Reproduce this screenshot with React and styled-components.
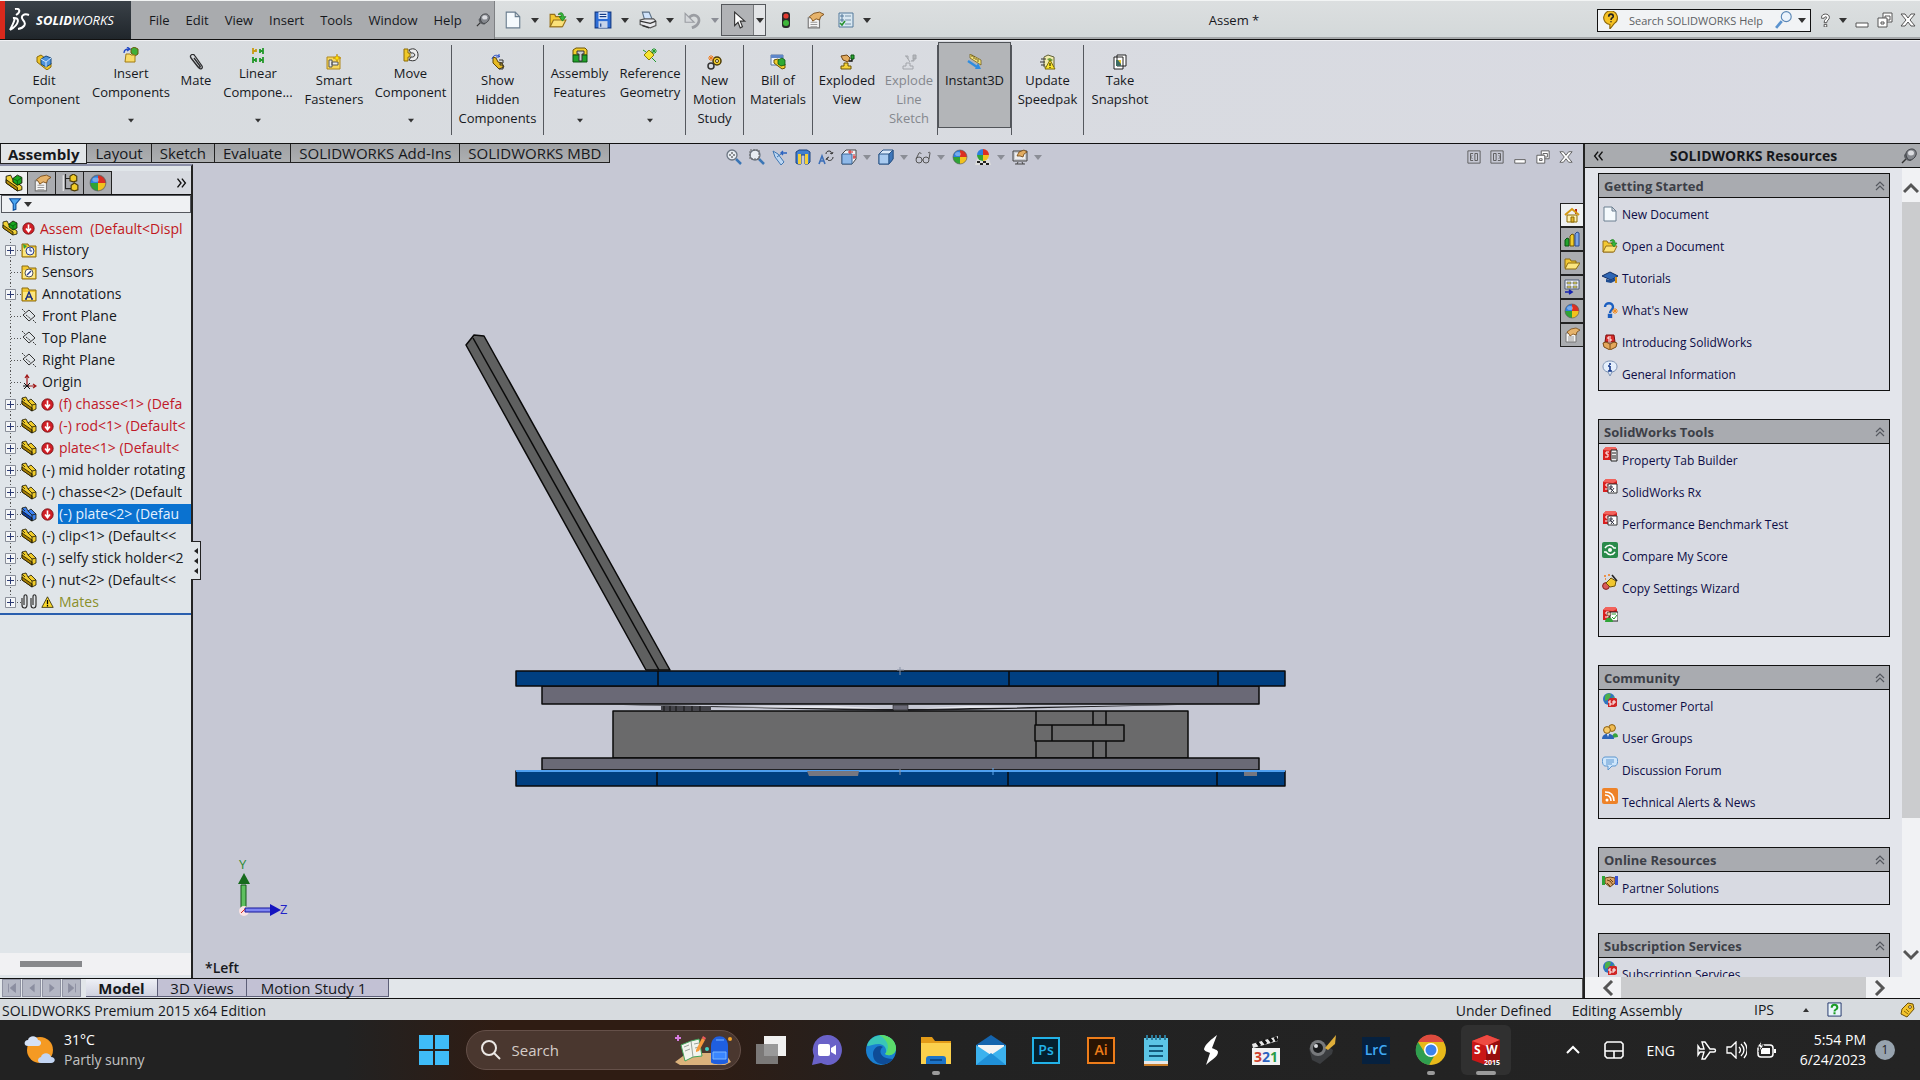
import React, { useState } from 'react'
import styled, { createGlobalStyle, css } from 'styled-components'

const part = (a, b) => (
    <g stroke="#1a1604" strokeWidth=".8" strokeLinejoin="round">
        <path d="M1 2l4-1 2 4 3-2 5 5v5l-4 2L1 8z" fill={a} />
        <path d="M1 5l10 7v3L1 8z" fill={b} />
        <path d="M7 5l4 4 4-1M11 9v6M1 2l3 3" fill="none" />
    </g>
)

const assembly = (
    <g strokeLinejoin="round" stroke="#1a1604" strokeWidth=".8">
        <path d="M1 2l4-1 2 4 8 6v3l-4 1L1 8z" fill="#f2d236" />
        <path d="M1 5l10 7v3L1 8z" fill="#b88f08" />
        <path d="M7 4l4-3 4 2v5l-4 2-4-3z" fill="#17a51f" />
        <path d="M7 4l4 2 4-3M11 6v4" fill="none" stroke="#075c0c" />
    </g>
)

const folder = (
    <>
        <path d="M1 4V2h6l1 2h7v11H1z" fill="#f3c832" stroke="#8a6a10" />
        <path d="M2 6h12v8H2z" fill="#fbe681" />
    </>
)

const ball = (
    <>
        <path d="M8 8V1a7 7 0 0 0-7 7z" fill="#2d7fe0" />
        <path d="M8 8h7a7 7 0 0 0-7-7z" fill="#dc2f22" />
        <path d="M8 8v7a7 7 0 0 0 7-7z" fill="#f2c21d" />
        <path d="M8 8H1a7 7 0 0 0 7 7z" fill="#2fa336" />
        <circle cx="8" cy="8" r="7" fill="none" stroke="#555" strokeOpacity=".6" />
        <ellipse cx="6" cy="5" rx="3" ry="2" fill="#fff" opacity=".35" />
    </>
)

const plane = (
    <g fill="none" stroke="#333">
        <path d="M8 2 14 8 8 13 2 7z" />
        <path d="M1 1l3 3M12 12l3 3M5 7l5 4" strokeDasharray="2 1" />
    </g>
)

const hand = (
    <>
        <path d="M2 6h10v9H2z" fill="#f4f4f4" stroke="#777" />
        <path d="M4 10h6M4 12h6M4 14h6" stroke="#999" />
        <path d="M3 5l4-3 5-1 4 2-3 2-1 3-3-1-3 2-1-2z" fill="#e6b36b" stroke="#7a4d17" strokeWidth=".8" />
    </>
)

const swCube = (
    <>
        <path d="M1 4l3-3h9l2 2v9l-3 2H1z" fill="#d81f1f" />
        <path d="M1 4l3-3h9l2 2-4 2z" fill="#f2625b" />
        <path d="M7 6H4v2h2v3H3" fill="none" stroke="#fff" />
    </>
)

const rx = (
    <>
        {swCube}
        <path d="M6 6h9v9H6z" fill="#fff" stroke="#333" />
        <path d="M8 12V8h2v2H8l4 4M12 10l-3 4" fill="none" stroke="#334" />
    </>
)

const globe = (
    <>
        <circle cx="7" cy="7" r="6" fill="#2f74c0" />
        <path d="M3 4c2-3 5-3 6-1L7 7 3 9zM8 8l4-4v6z" fill="#4db04a" />
        <path d="M6 8l2-2h6l1 1v7l-2 1H6z" fill="#d02525" />
        <path d="M9 9H7v2h2v2H7M11 13V9h2v2h-2" fill="none" stroke="#fff" />
    </>
)

const magnifier = (
    <>
        <path d="M10 10l5 5" stroke="#3b76b5" strokeWidth="2.5" />
        <circle cx="6" cy="6" r="5" fill="#e8edf3" stroke="#6c7683" strokeWidth="1.3" />
    </>
)

const doc = <path d="M2 1h8l4 4v10H2zM10 1v4h4" fill="#f5fafd" stroke="#6b7f90" />

const openDoc = (
    <>
        <path d="M1 5V3h4l1 2h5v9H1z" fill="#f3c832" stroke="#96701a" />
        <path d="M4 8h11l-3 6H1z" fill="#fbe27a" stroke="#96701a" />
        <path d="M8 3c3-3 5-1 5 2h2l-3 4-3-4h2c0-2-1-2-3-2z" fill="#35b63a" stroke="#157319" strokeWidth=".6" />
    </>
)

const gearMan = <path d="M3 3l3 1 2 4 4 1 2 4-5 2-6-6z" fill="#e7ba22" stroke="#5b4404" />

const pin = (
    <>
        <path d="M1 15l4-4" stroke="#333" strokeWidth="1.4" />
        <path d="M3 7c0 4 3 6 7 6l1-2-6-6z" fill="#5c5f64" />
        <path d="M5 6c0-3 3-5 6-5s5 3 4 6-4 5-6 5-4-3-4-6z" fill="#85888e" stroke="#3f4146" />
        <ellipse cx="10" cy="5" rx="3" ry="2.5" fill="#dcdde1" />
    </>
)

const glyphs = {
    part: part('#f0cc2c', '#a87f04'),
    partBlue: part('#3d82f2', '#0c3aa0'),
    assembly,
    folder,
    ball,
    plane,
    hand,
    globe,
    rx,
    pin,
    doc,
    openDoc,
    error: (
        <>
            <circle cx="8" cy="8" r="7" fill="#d11f26" stroke="#6d0b0f" />
            <path d="M8 3v8M5 8l3 4 3-4" fill="none" stroke="#fff" strokeWidth="2" />
        </>
    ),
    warn: (
        <>
            <path d="M8 1l7 13H1z" fill="#fbd92d" stroke="#2d2806" strokeLinejoin="round" />
            <path d="M8 5v5M8 11v2" stroke="#000" strokeWidth="1.6" />
        </>
    ),
    clips: (
        <path
            d="M1 4v7c0 4 5 4 5 0V3C6 0 3 0 3 3v8M10 4v7c0 4 5 4 5 0V3c0-3-3-3-3 0v8"
            fill="none"
            stroke="#333"
            strokeWidth="1.2"
        />
    ),
    clip: <path d="M3 4l8 10c2 2 4 0 3-2L7 2C5-1 1 1 3 4l7 9c1 1 3 0 2-1L6 4" fill="none" stroke="#2c2c2e" strokeWidth="1.3" />,
    history: (
        <>
            {folder}
            <circle cx="9" cy="9" r="4" fill="#eef3ff" stroke="#2d3f8c" />
            <path d="M9 6v3h2" fill="none" stroke="#2d3f8c" />
            <path d="M2 2l4 2-3 3z" fill="#2fa336" />
        </>
    ),
    sensors: (
        <>
            {folder}
            <circle cx="8" cy="9" r="4" fill="#fff" stroke="#555" />
            <path d="M6 11l4-4" stroke="#2d3f8c" strokeWidth="1.4" />
        </>
    ),
    annot: (
        <>
            {folder}
            <path d="M5 13l3-7 3 7M6 11h4M4 13h2M10 13h2" fill="none" stroke="#1c2f80" strokeWidth="1.4" />
        </>
    ),
    origin: (
        <>
            <path d="M6 12V2M6 12h8M4 4l2-3 2 3M12 10l3 2-3 2" fill="none" stroke="#a01818" strokeWidth="1.2" />
            <path d="M3 9l6 6M3 15l6-6M2 12h6" stroke="#111" />
        </>
    ),
    funnel: <path d="M2 2h12L9 8v6l-3 1V8z" fill="#4aa4f0" stroke="#0f4e9c" strokeWidth="1.3" />,
    config: (
        <>
            <path d="M4 0v13h5M4 4h5" fill="none" stroke="#222" />
            <path d="M2 1v14" stroke="#eee" />
            <path d="M8 2l3-2 3 2v4l-3 1-3-1zM9 10l3-2 3 2v4l-3 1-3-1z" fill="#f0cb28" stroke="#4b3a04" />
        </>
    ),
    editComp: (
        <>
            <path d="M1 3l4-2 4 3 6 5v4l-4 3L1 8z" fill="#eec52a" stroke="#8b6a06" />
            <path d="M5 5l5-3 5 2v6l-5 3-5-3z" fill="#4d93dd" stroke="#17477d" />
            <path d="M5 5l5 3 5-4M10 8v5" fill="none" stroke="#cfe4fb" />
        </>
    ),
    insertComp: (
        <>
            <path d="M8 2l3-2 4 2v5l-3 2-4-3z" fill="#40ae38" stroke="#6a5a06" />
            <path d="M3 7h4l1 1h4v7H2z" fill="#f9db68" stroke="#a07a12" />
            <path d="M1 6c0-3 2-4 5-4M4 0l3 2-3 2" fill="none" stroke="#2348c4" strokeWidth="1.3" />
        </>
    ),
    linear: (
        <g strokeWidth="1.8" fill="none">
            <path d="M3 1v6M3 4h3M6 2v3" stroke="#c99b13" />
            <path d="M10 4h3M10 2v4M13 1v6M3 10v6M3 13h3M6 11v4M10 13h3M10 11v4M13 10v6" stroke="#23982a" />
        </g>
    ),
    smart: (
        <>
            <path d="M1 3h13v12H1z" fill="#f7d75a" stroke="#b0881c" />
            <path d="M3 6h3v7H3zM6 8h6v3H6z" fill="#eee" stroke="#555" />
            <path d="M11 0l1 3 3 1-3 1-1 3-1-3-3-1 3-1z" fill="#ffe100" stroke="#b9820a" strokeWidth=".6" />
        </>
    ),
    move: (
        <>
            <path d="M1 2h4v4h2v4H5v4H1z" fill="#f0c928" stroke="#8b6a06" />
            <path d="M6 3c5-3 9 0 9 5s-4 7-9 5l2-3c5 1 5-5 0-4z" fill="#eee" stroke="#333" />
        </>
    ),
    showHidden: (
        <>
            {gearMan}
            <path d="M9 6h4v3h-3v2h3v4H9" fill="none" stroke="#333" />
            <path d="M2 5c1-4 5-5 8-2M9 0v3H6" fill="none" stroke="#2348c4" />
        </>
    ),
    features: (
        <>
            <path d="M1 3l3-2h9l2 2v5H1z" fill="#f4cf2d" stroke="#6c5405" />
            <path d="M1 8h14v7H1z" fill="#20a32a" stroke="#0a5310" />
            <path d="M5 4h7v3h-2v7H7V7H5z" fill="#c9ccd0" stroke="#333" />
        </>
    ),
    refGeo: (
        <>
            <path d="M7 3l5 5-5 5-5-5z" fill="#f6e431" stroke="#8b7d06" />
            <path d="M1 3l3 2M10 11l4 4M12 1v6M9 4h6M10 2l4 4M14 2l-4 4" stroke="#1f9a2b" />
        </>
    ),
    motion: (
        <>
            <circle cx="10" cy="7" r="4" fill="#f4cf2d" stroke="#4b3a04" strokeWidth="1.5" />
            <circle cx="10" cy="7" r="1.5" fill="#fff" stroke="#4b3a04" />
            <circle cx="4" cy="12" r="3" fill="#d7dae0" stroke="#333" strokeWidth="1.5" />
            <path d="M4 1v6M1 4h6M2 2l4 4M6 2L2 6" stroke="#ef7a1a" />
        </>
    ),
    bill: (
        <>
            <path d="M1 1h12v10H1z" fill="#eef3fb" stroke="#5674a3" />
            <path d="M1 1h12v3H1z" fill="#5e86c9" />
            <path d="M4 6l4-1 7 5v4l-3 1-8-6z" fill="#f2cd2c" stroke="#6c5405" />
            <path d="M8 6l4-2 3 2v5l-4 1-3-2z" fill="#2eaa32" stroke="#0a5310" strokeWidth=".8" />
        </>
    ),
    exploded: (
        <>
            <path d="M2 15v-3h3V9h4v3h3v3z" fill="#f6d43a" stroke="#6c5405" />
            <path d="M2 2l6-1 3 3-2 4-5-2z" fill="#e2ac61" stroke="#6d4413" />
            <path d="M10 7h3V4" fill="none" stroke="#111" strokeWidth="1.4" />
            <path d="M12 1h3v4h-3z" fill="#28a832" stroke="#0a5310" />
        </>
    ),
    explodeLine: (
        <g fill="none" stroke="#a2a5aa">
            <path d="M2 15v-3h3V9h4v3h3v3zM5 2l4 6M4 2h3v3" />
            <path d="M10 7h3V4M12 1h3v4h-3z" fill="#b4b7bb" />
        </g>
    ),
    instant: (
        <>
            <path d="M3 0l11 6v5L3 4z" fill="#f5e47c" stroke="#77631a" strokeWidth=".8" />
            <path d="M5 1v2M7 2v3M9 4v2M11 5v3" stroke="#4b3a04" strokeWidth=".8" />
            <path d="M1 7l9 6" stroke="#2f8de0" strokeWidth="2.4" />
            <path d="M8 15h6l-3-6z" fill="#2f8de0" />
        </>
    ),
    speedpak: (
        <>
            <path d="M4 3l4-2 6 2v10H4z" fill="#f2ecae" stroke="#60603a" />
            <path d="M7 5l3-1 3 2-3 2z" fill="#6a9c3c" />
            <path d="M1 5h5M0 8h5M1 11h4" stroke="#333" />
            <path d="M10 6l5 9H5z" fill="#fbe42d" stroke="#7a6a06" />
            <path d="M10 9v3M10 13v1" stroke="#000" />
        </>
    ),
    snapshot: (
        <>
            <path d="M5 1h9v11H5zM2 3h9v12H2z" fill="#fff" stroke="#222" />
            <path d="M4 6h5v6H4z" fill="#3c6b62" />
            <path d="M6 6h3v4z" fill="#eac92b" />
        </>
    ),
    save: (
        <>
            <path d="M1 1h14v14H1z" fill="#2d6dd6" stroke="#123a86" />
            <path d="M4 1h8v6H4z" fill="#eef4ff" />
            <path d="M4 9h8v6H4z" fill="#c7d4ea" />
            <path d="M5 3h6M5 5h6M6 11v3" stroke="#123a86" />
        </>
    ),
    print: (
        <>
            <path d="M3 1h6l3 7H5z" fill="#cfe2fa" stroke="#5d7288" />
            <path d="M1 8l4-1 8 0 2 2v4l-5 2-9-3z" fill="#e8e9ec" stroke="#555" />
            <path d="M1 9l9 2 5-2M3 13l6 2" fill="none" stroke="#333" />
        </>
    ),
    undo: (
        <>
            <path d="M4 7c3-6 11-3 9 3-1 3-3 4-6 5" fill="none" stroke="#9a9da2" strokeWidth="2.4" />
            <path d="M1 2v8h8z" fill="#d5d8db" stroke="#9a9da2" />
        </>
    ),
    cursor: <path d="M5 1v12l3-3 2 5 2-1-2-5h4z" fill="#fff" stroke="#333" />,
    traffic: (
        <>
            <rect x="4" y="0" width="8" height="16" rx="3" fill="#2a2a2a" />
            <circle cx="8" cy="4" r="2.6" fill="#e23a2f" />
            <circle cx="8" cy="11" r="3" fill="#3fb63a" />
        </>
    ),
    options: (
        <>
            <path d="M1 1h14v14H1z" fill="#d9e8f2" stroke="#53789a" />
            <path d="M3 3h2v2H3zM3 7h2v2H3z" fill="none" stroke="#53789a" />
            <path d="M7 4h6M7 8h6M7 12h6" stroke="#7894aa" />
            <path d="M2 11l2 2 3-4" fill="none" stroke="#26912d" strokeWidth="1.6" />
        </>
    ),
    helpBubble: (
        <>
            <path d="M8 0a6 6 0 0 1 3 11l-4 5 0-4A6 6 0 0 1 8 0z" fill="#f6c224" stroke="#8b6506" />
            <path d="M6 5c0-3 4-3 4 0 0 1-2 1-2 3M8 9v1" fill="none" stroke="#222" strokeWidth="1.4" />
        </>
    ),
    searchBlue: (
        <>
            <path d="M1 15l5-6" stroke="#5a93cf" strokeWidth="2.4" />
            <circle cx="10" cy="5" r="4.4" fill="#eaf2fb" stroke="#5a86b5" />
        </>
    ),
    help: <path d="M4 5c0-5 9-5 9 0 0 3-3 3-3 6H7c0-4 3-4 3-6 0-1-3-1-3 1H4zM7 13h3v3H7z" fill="#fff" stroke="#444" />,
    min: <path d="M2 11h12v4H2z" fill="#fff" stroke="#555" />,
    restore: (
        <g fill="#fff" stroke="#555">
            <path d="M6 1h9v9H6z" />
            <path d="M8 4h5v4H8z" />
            <path d="M1 6h9v9H1z" />
            <path d="M4 10h3v2H4z" />
        </g>
    ),
    close: <path d="M1 2h4l3 4 3-4h4l-5 6 5 6h-4l-3-4-3 4H1l5-6z" fill="#fff" stroke="#555" />,
    paneLeft: <path d="M1 1h14v14H1zM9 4h3v8H9zM7 4H4v8h3M6 6L4 8l2 2" fill="none" stroke="#555" />,
    paneRight: <path d="M1 1h14v14H1zM4 4h3v8H4zM9 4h3v8H9M10 6l2 2-2 2" fill="none" stroke="#555" />,
    zoomFit: (
        <>
            {magnifier}
            <path d="M6 3v6M3 6h6" stroke="#333" strokeDasharray="2 2" />
        </>
    ),
    zoomArea: (
        <>
            {magnifier}
            <path d="M1 1h9v9H1z" fill="none" stroke="#666" strokeDasharray="2 1" />
        </>
    ),
    prevView: (
        <>
            <path d="M1 2l5 3 6 8-3 3-6-8z" fill="#bcd6f2" stroke="#4077b3" />
            <path d="M5 8l4-3" stroke="#4077b3" />
            <path d="M15 4H9M11 2L9 4l2 2" fill="none" stroke="#2a62c0" strokeWidth="1.4" />
        </>
    ),
    section: (
        <>
            <path d="M1 3l3-2h8l3 2v10l-2 2h-3V6H6v9H3l-2-1z" fill="#3f7fd0" stroke="#1e4580" />
            <path d="M3 5h3v10H3zM10 5h3v10h-3z" fill="#f2cf3a" />
        </>
    ),
    orient: (
        <>
            <path d="M1 15l3-8 3 8M2 12h4" fill="none" stroke="#3c6fb8" strokeWidth="1.6" />
            <path d="M8 5c0-4 6-4 6 0M15 8c0 4-6 5-6 1M12 4l2 1 1-2M11 8L9 9l-1 2" fill="none" stroke="#333" />
        </>
    ),
    cubeView: (
        <>
            <path d="M1 5l4-4h10v9l-4 5H1z" fill="#eef3f8" stroke="#444" />
            <path d="M1 5h10v10H1z" fill="#8fb9e8" stroke="#3d6797" />
            <path d="M7 3h5M9 1v4M13 5v5M12 8h3" stroke="#d52424" />
        </>
    ),
    cube: (
        <>
            <path d="M1 5l4-4h10v9l-4 5H1z" fill="#d9e9fa" stroke="#2d5688" />
            <path d="M1 5h10v10H1z" fill="#a9cbf0" stroke="#2d5688" />
            <path d="M11 5l4-4v9l-4 5z" fill="#3d76bb" stroke="#2d5688" />
        </>
    ),
    glasses: (
        <g fill="none" stroke="#555">
            <circle cx="4" cy="11" r="3" />
            <circle cx="11" cy="11" r="3" />
            <path d="M7 11h1M1 10L4 4c1-1 2 0 2 1M14 10l1-6c0-1-1-1-2 0" />
        </g>
    ),
    scene: (
        <>
            <path d="M2 10h12l2 6H0z" fill="#ddd" />
            <path d="M2 12h3v2H2zM8 12h3v2H8zM5 14h3v2H5zM11 14h3v2h-3z" fill="#222" />
            <path d="M8 6V0a6 6 0 0 0-6 6z" fill="#2d7fe0" />
            <path d="M8 6h6a6 6 0 0 0-6-6z" fill="#dc2f22" />
            <path d="M8 6v6a6 6 0 0 0 6-6z" fill="#f2c21d" />
            <path d="M8 6H2a6 6 0 0 0 6 6z" fill="#2fa336" />
        </>
    ),
    viewSet: (
        <>
            <path d="M1 2h14v10H1z" fill="#c9ccd2" stroke="#444" />
            <path d="M3 4h10v6H3z" fill="#eee" />
            <path d="M3 15h10M6 13l-1 2M10 13l1 2" stroke="#444" />
            <path d="M5 7l2-4 5-2 3 2-3 2-1 3-3-1z" fill="#e2ac61" stroke="#6d4413" strokeWidth=".8" />
        </>
    ),
    home: (
        <>
            <path d="M11 2h2v5h-2z" fill="#b3261e" />
            <path d="M3 8h10v7H3z" fill="#fff1b0" stroke="#8b6a06" />
            <path d="M1 8l7-6 7 6" fill="none" stroke="#d69a12" strokeWidth="2" />
            <path d="M7 10h3v5H7z" fill="#e3b62c" stroke="#8b6a06" />
        </>
    ),
    library: (
        <>
            <path d="M1 9l2-2 2 1v7H1z" fill="#23a32c" stroke="#0a5310" />
            <path d="M6 5l2-2 2 1v11H6z" fill="#f2cd2c" stroke="#6c5405" />
            <path d="M11 3l2-2 2 1v13h-4z" fill="#7ba4e6" stroke="#2a4a8c" />
        </>
    ),
    explorer: (
        <>
            <path d="M1 13V4h5l1 2h5v2" fill="#f3c832" stroke="#8a6a10" />
            <path d="M4 8h12l-4 6H1z" fill="#fbe681" stroke="#8a6a10" />
        </>
    ),
    palette: (
        <>
            <path d="M1 1h14v9H1z" fill="#f3f4f6" stroke="#4d5b74" />
            <path d="M3 3h4v2H3zM9 3h4v2H9zM3 7h4v2H3zM9 7h4v2H9z" fill="#e2d04a" stroke="#4d5b74" strokeWidth=".6" />
            <path d="M1 13h6M5 11l3 2-3 2" stroke="#1522b0" strokeWidth="1.6" fill="none" />
        </>
    ),
    tutorials: (
        <>
            <path d="M0 6l8-4 8 4-7 4z" fill="#2f66b4" stroke="#122f63" />
            <path d="M4 9v3l5 1 4-2V8L9 10z" fill="#1f4c90" />
            <path d="M14 7v6" stroke="#d38f15" strokeWidth="2" />
        </>
    ),
    whatsNew: (
        <>
            <path d="M3 5c0-5 8-5 8 0 0 3-3 3-3 6M7 13h2v2H7z" fill="none" stroke="#1c5fc0" strokeWidth="2.4" />
            <path d="M13 6v6M10 9h6M11 7l4 4M15 7l-4 4" stroke="#f28a1c" />
        </>
    ),
    intro: (
        <>
            <path d="M4 1h8l1 7H3z" fill="#d82a2a" stroke="#7d1111" />
            <path d="M9 3H6v2h3v2H6" fill="none" stroke="#fff" />
            <path d="M1 9l3-1 4 2 4-2 3 1-1 4-6 3-6-3z" fill="#e3a75c" stroke="#7a4a14" />
            <path d="M8 10v5" stroke="#7a4a14" />
        </>
    ),
    info: (
        <>
            <path d="M8 1c9 0 9 10 2 11l-2 4-2-4C-1 11-1 1 8 1z" fill="#e4eefb" stroke="#7d93b4" />
            <path d="M8 3v2M8 6v5M6 11h4M6 6h2" stroke="#12368a" strokeWidth="1.6" />
        </>
    ),
    tabBuilder: (
        <>
            {swCube}
            <path d="M9 4h6v11H9z" fill="#eee" stroke="#222" />
            <path d="M10 7h4M10 10h4M10 12h4" stroke="#222" />
        </>
    ),
    score: (
        <>
            <rect width="16" height="16" rx="2" fill="#2a8a4b" />
            <circle cx="8" cy="8" r="2" fill="#fff" />
            <path d="M3 6c2-3 6-4 9 0h2M13 10c-2 3-6 4-9 0H2" fill="none" stroke="#fff" strokeWidth="1.5" />
        </>
    ),
    wizard: (
        <>
            <circle cx="4" cy="12" r="3.4" fill="#d95b58" stroke="#80201e" />
            <path d="M4 9l5-5 5 3-1 5-5 1z" fill="#f0c62f" stroke="#6c5405" />
            <path d="M10 1l5 6" stroke="#222" strokeWidth="1.6" />
            <path d="M2 2h2M6 1h2M3 5h1" stroke="#ef7a1a" strokeWidth="1.6" />
        </>
    ),
    benchUser: (
        <>
            {swCube}
            <path d="M8 6h8v9H8z" fill="#fff" stroke="#222" />
            <path d="M10 8h4M10 11l2 2 3-4" fill="none" stroke="#23982a" />
            <path d="M3 16c0-6 8-6 8 0z" fill="#2fa336" />
            <circle cx="7" cy="8" r="2" fill="#e8c79a" stroke="#222" strokeWidth=".6" />
        </>
    ),
    users: (
        <>
            <circle cx="10" cy="4" r="3.4" fill="#f0bb52" stroke="#8b5d0e" />
            <circle cx="5" cy="6" r="3.4" fill="#f6cb6c" stroke="#8b5d0e" />
            <path d="M10 14c0-6 6-6 6-1z" fill="#38a33d" />
            <path d="M0 15c0-7 12-7 12 0z" fill="#2c64b8" />
            <path d="M5 10l2 0-1 3z" fill="#fff" />
        </>
    ),
    forum: (
        <>
            <path d="M3 1h10c4 0 3 9 0 9h-3l-4 4V10H3C0 10-1 1 3 1z" fill="#cfe6fb" stroke="#5c96cf" />
            <path d="M4 4h8M4 6h8M4 8h6" stroke="#5c96cf" />
        </>
    ),
    rss: (
        <>
            <rect width="16" height="16" rx="2" fill="#ee8228" />
            <circle cx="5" cy="12" r="1.5" fill="#fff" />
            <path d="M3 7c4 0 6 2 6 6M3 4c6 0 9 3 9 9" fill="none" stroke="#fff" strokeWidth="1.6" />
        </>
    ),
    shake: (
        <>
            <path d="M3 4l5-1 5 1v5l-5 4-5-4z" fill="#dba368" stroke="#6d4413" />
            <path d="M5 6l3 1 3 4M8 5l3 3M5 9l3 3" stroke="#6d4413" fill="none" />
            <path d="M0 2h3v9H0z" fill="#2fa336" />
            <path d="M13 2h3v9h-3z" fill="#3a4fd0" />
        </>
    ),
    tag: (
        <>
            <path d="M3 7l6-6 5 1 1 5-7 8-6-3z" fill="#f3c32c" stroke="#6d5006" />
            <circle cx="11" cy="5" r="1.4" fill="#fff" stroke="#6d5006" />
            <path d="M5 9l4 3M7 7l3 3" stroke="#8b6a06" />
        </>
    ),
    helpGreen: (
        <>
            <path d="M1 1h14v14H1z" fill="#eaf6fb" stroke="#1d2f66" />
            <path d="M5 6c0-4 6-4 6 0 0 2-3 2-3 4M8 11v2" fill="none" stroke="#1c9d26" strokeWidth="2.2" />
        </>
    ),
    navFirst: <path d="M4 3v10M12 3v10L6 8z" fill="#8b8ea0" stroke="#8b8ea0" />,
    navPrev: <path d="M11 3v10L5 8z" fill="#8b8ea0" />,
    navNext: <path d="M5 3v10l6-5z" fill="#8b8ea0" />,
    navLast: <path d="M12 3v10M4 3v10l6-5z" fill="#8b8ea0" stroke="#8b8ea0" />,
    chevronUp: <path d="M1 11l7-7 7 7" fill="none" stroke="#555" strokeWidth="3" />,
    chevronDown: <path d="M1 5l7 7 7-7" fill="none" stroke="#555" strokeWidth="3" />,
    chevronLeft: <path d="M11 1L4 8l7 7" fill="none" stroke="#555" strokeWidth="3" />,
    chevronRight: <path d="M5 1l7 7-7 7" fill="none" stroke="#555" strokeWidth="3" />,
    collapse: <path d="M4 8l4-4 4 4M4 12l4-4 4 4" fill="none" stroke="#55585f" strokeWidth="1.2" />,
    doubleLeft: <path d="M7 3L3 8l4 5M12 3L8 8l4 5" fill="none" stroke="#111" strokeWidth="1.6" />,
    doubleRight: <path d="M4 3l4 5-4 5M9 3l4 5-4 5" fill="none" stroke="#111" strokeWidth="1.6" />,
}

const Icon = ({ name, size = 16 }) => (
    <svg width={size} height={size} viewBox="0 0 16 16" aria-hidden="true">{glyphs[name]}</svg>
)

const Caret = ({ faded }) => (
    <svg width="8" height="5" viewBox="0 0 8 5" aria-hidden="true">
        <path d="M0 0h8L4 5z" fill={faded ? '#8b8e96' : '#333'} />
    </svg>
)

const taskIcons = {
    start: (
        <path d="M1 1h14v14H1zM17 1h14v14H17zM1 17h14v14H1zM17 17h14v14H17z" fill="#3fbcf8" />
    ),
    taskView: (
        <>
            <rect x="9" y="2" width="22" height="20" fill="#f0f0f0" />
            <rect x="1" y="10" width="22" height="20" fill="#8a8a8a" opacity=".85" />
        </>
    ),
    chat: (
        <>
            <path d="M17 1a14 15 0 1 1-6 28l-9 2 2-9A15 15 0 0 1 17 1z" fill="#6a62c8" />
            <rect x="8" y="10" width="12" height="12" rx="2" fill="#fff" />
            <path d="M21 14l5-3v10l-5-3z" fill="#fff" />
        </>
    ),
    edge: (
        <>
            <circle cx="16" cy="16" r="15" fill="#1a7fd0" />
            <path d="M2 12C5-2 29-3 31 14c0 6-6 9-11 6 3-3 0-10-6-10-5 0-9 2-12 2z" fill="#39c6b8" />
            <path d="M14 1c10-1 17 6 17 13 0 6-6 9-11 6 5-5 4-14-6-19z" fill="#5bdc6a" />
            <path d="M8 20c0-6 6-10 10-7-4 2-5 12 10 12-7 9-20 6-20-5z" fill="#0e4c97" />
        </>
    ),
    files: (
        <>
            <path d="M1 3h11l3 4h16v8H1z" fill="#e39b18" />
            <path d="M1 9h30v21H1z" fill="#fbd04c" />
            <path d="M6 30v-5c0-2 1-3 3-3h14c2 0 3 1 3 3v5z" fill="#1d74c8" />
            <path d="M10 26h12" stroke="#0b4a8c" strokeWidth="2" />
        </>
    ),
    mail: (
        <>
            <path d="M1 11L16 1l15 10v5H1z" fill="#1464ad" />
            <path d="M3 11h26v10H3z" fill="#f3f3f3" />
            <path d="M1 11l15 10 15-10v20H1z" fill="#3cb2ee" />
            <path d="M1 31l15-12 15 12z" fill="#2090d8" />
        </>
    ),
    notepad: (
        <>
            <path d="M4 4h24v23H4z" fill="#5cc5e6" />
            <path d="M4 27h24v3H4z" fill="#e8e8e8" />
            <path d="M4 30h24v2H4z" fill="#c77c28" />
            <path d="M9 12h14M9 17h14M9 22h14" stroke="#135a7d" strokeWidth="2" />
            <path d="M7 1v5M12 1v5M16 1v5M20 1v5M25 1v5" stroke="#2b7c9c" strokeWidth="2" />
        </>
    ),
    bolt: <path d="M22 1C17 5 10 10 9 15c0 2 4 3 6 4l-4 12c5-5 12-8 12-13 0-2-4-3-6-4z" fill="#fff" />,
    lightroomCam: (
        <>
            <path d="M4 14l12-7 12 9-1 4-12 10-8-4z" fill="#3b3d40" />
            <circle cx="13" cy="14" r="8" fill="#77797c" />
            <circle cx="13" cy="14" r="5" fill="#1b1c1e" />
            <circle cx="11" cy="12" r="2" fill="#d8dadd" />
            <path d="M20 14L31 1l-1 9-7 6z" fill="#dfae3a" />
        </>
    ),
    chrome: (
        <>
            <circle cx="16" cy="16" r="15" fill="#e8b91a" />
            <path d="M3 8A15 15 0 0 1 29 8H16z" fill="#dd4b3e" />
            <path d="M3 8A15 15 0 0 0 14 31l7-12H10z" fill="#2f9e4f" />
            <circle cx="16" cy="16" r="7" fill="#fff" />
            <circle cx="16" cy="16" r="5.5" fill="#3b82ec" />
        </>
    ),
}

const ribbonGroups = [
    [
        { icon: 'editComp', text: 'Edit\nComponent', w: 88 },
        { icon: 'insertComp', text: 'Insert\nComponents', w: 86, menu: true },
        { icon: 'clip', text: 'Mate', w: 44 },
        { icon: 'linear', text: 'Linear\nCompone...', w: 80, menu: true },
        { icon: 'smart', text: 'Smart\nFasteners', w: 72 },
        { icon: 'move', text: 'Move\nComponent', w: 81, menu: true },
    ],
    [{ icon: 'showHidden', text: 'Show\nHidden\nComponents', w: 91 }],
    [
        { icon: 'features', text: 'Assembly\nFeatures', w: 71, menu: true },
        { icon: 'refGeo', text: 'Reference\nGeometry', w: 70, menu: true },
    ],
    [{ icon: 'motion', text: 'New\nMotion\nStudy', w: 57 }],
    [{ icon: 'bill', text: 'Bill of\nMaterials', w: 68 }],
    [
        { icon: 'exploded', text: 'Exploded\nView', w: 68 },
        { icon: 'explodeLine', text: 'Explode\nLine\nSketch', w: 56, disabled: true },
    ],
    [{ icon: 'instant', text: 'Instant3D', w: 73, pressed: true }],
    [{ icon: 'speedpak', text: 'Update\nSpeedpak', w: 71 }],
    [{ icon: 'snapshot', text: 'Take\nSnapshot', w: 72 }],
]

const treeItems = [
    { icon: 'history', text: 'History', open: true },
    { icon: 'sensors', text: 'Sensors' },
    { icon: 'annot', text: 'Annotations', open: true },
    { icon: 'plane', text: 'Front Plane' },
    { icon: 'plane', text: 'Top Plane' },
    { icon: 'plane', text: 'Right Plane' },
    { icon: 'origin', text: 'Origin' },
    { icon: 'part', text: '(f) chasse<1> (Defa', open: true, badge: 'error' },
    { icon: 'part', text: '(-) rod<1> (Default<', open: true, badge: 'error' },
    { icon: 'part', text: 'plate<1> (Default<', open: true, badge: 'error' },
    { icon: 'part', text: '(-) mid holder rotating', open: true },
    { icon: 'part', text: '(-) chasse<2> (Default', open: true },
    { icon: 'partBlue', text: '(-) plate<2> (Defau', open: true, badge: 'error', selected: true },
    { icon: 'part', text: '(-) clip<1> (Default<<', open: true },
    { icon: 'part', text: '(-) selfy stick holder<2', open: true },
    { icon: 'part', text: '(-) nut<2> (Default<<', open: true },
    { icon: 'clips', text: 'Mates', open: true, badge: 'warn' },
]

const resources = [
    {
        title: 'Getting Started',
        links: [
            ['doc', 'New Document'],
            ['openDoc', 'Open a Document'],
            ['tutorials', 'Tutorials'],
            ['whatsNew', "What's New"],
            ['intro', 'Introducing SolidWorks'],
            ['info', 'General Information', true],
        ],
    },
    {
        title: 'SolidWorks Tools',
        links: [
            ['tabBuilder', 'Property Tab Builder', true],
            ['rx', 'SolidWorks Rx', true],
            ['rx', 'Performance Benchmark Test', true],
            ['score', 'Compare My Score', true],
            ['wizard', 'Copy Settings Wizard', true],
            ['benchUser', '', true],
        ],
    },
    {
        title: 'Community',
        links: [
            ['globe', 'Customer Portal', true],
            ['users', 'User Groups', true],
            ['forum', 'Discussion Forum', true],
            ['rss', 'Technical Alerts & News', true],
        ],
    },
    { title: 'Online Resources', links: [['shake', 'Partner Solutions', true]] },
    { title: 'Subscription Services', links: [['globe', 'Subscription Services', true]] },
]

function TitleBar() {
    return (
        <TitleWrap>
            <Brand>
                <svg width="21" height="24" viewBox="0 0 21 24" aria-hidden="true">
                    <path
                        d="M6 1c5-1 6 3 1 6M1 22c4-8 6-12 3-12 7-1 7 6-3 12M20 7c-5-2-9 1-6 5 4 4 1 8-5 9"
                        fill="none"
                        stroke="#fff"
                        strokeWidth="2"
                    />
                </svg>
                <b>SOLID</b>
                <span>WORKS</span>
            </Brand>
            <MenuBar>
                {['File', 'Edit', 'View', 'Insert', 'Tools', 'Window', 'Help'].map(m => (
                    <button key={m}>{m}</button>
                ))}
                <Icon name="pin" size={14} />
            </MenuBar>
            <QuickTools>
                {['doc', 'openDoc', 'save', 'print', 'undo'].map(n => (
                    <ToolPair key={n}>
                        <IconButton aria-label={n}><Icon name={n} size={18} /></IconButton>
                        <Caret faded={n === 'undo'} />
                    </ToolPair>
                ))}
                <SelectTool aria-label="Select">
                    <span><Icon name="cursor" size={18} /></span>
                    <i><Caret /></i>
                </SelectTool>
                <IconButton aria-label="Rebuild"><Icon name="traffic" /></IconButton>
                <IconButton aria-label="File properties"><Icon name="hand" size={18} /></IconButton>
                <ToolPair>
                    <IconButton aria-label="Options"><Icon name="options" /></IconButton>
                    <Caret />
                </ToolPair>
            </QuickTools>
            <DocName>Assem *</DocName>
            <HelpSearch>
                <Icon name="helpBubble" size={18} />
                <input aria-label="Search help" placeholder="Search SOLIDWORKS Help" />
                <Icon name="searchBlue" size={18} />
                <Caret />
            </HelpSearch>
            <WindowButtons>
                <IconButton aria-label="Help"><Icon name="help" size={14} /></IconButton>
                <Caret />
                <IconButton aria-label="Minimize"><Icon name="min" /></IconButton>
                <IconButton aria-label="Restore"><Icon name="restore" /></IconButton>
                <IconButton aria-label="Close"><Icon name="close" /></IconButton>
            </WindowButtons>
        </TitleWrap>
    )
}

function Ribbon() {
    return (
        <RibbonWrap>
            {ribbonGroups.map((group, i) => (
                <RibbonGroup key={i}>
                    {group.map(b => (
                        <RibbonButton key={b.text} $w={b.w} $menu={b.menu} $pressed={b.pressed} disabled={b.disabled}>
                            <Icon name={b.icon} />
                            <span>{b.text}</span>
                            {b.menu && <Caret />}
                        </RibbonButton>
                    ))}
                </RibbonGroup>
            ))}
        </RibbonWrap>
    )
}

function CommandTabs() {
    const [active, setActive] = useState('Assembly')
    return (
        <TopRow>
            {['Assembly', 'Layout', 'Sketch', 'Evaluate', 'SOLIDWORKS Add-Ins', 'SOLIDWORKS MBD'].map(t => (
                <CommandTab key={t} $active={t === active} onClick={() => setActive(t)}>{t}</CommandTab>
            ))}
            <ViewTools>
                {['zoomFit', 'zoomArea', 'prevView', 'section', 'orient'].map(n => (
                    <IconButton key={n} aria-label={n}><Icon name={n} /></IconButton>
                ))}
                {['cubeView', 'cube', 'glasses'].map(n => (
                    <ToolPair key={n}>
                        <IconButton aria-label={n}><Icon name={n} /></IconButton>
                        <Caret faded />
                    </ToolPair>
                ))}
                <IconButton aria-label="Edit appearance"><Icon name="ball" /></IconButton>
                {['scene', 'viewSet'].map(n => (
                    <ToolPair key={n}>
                        <IconButton aria-label={n}><Icon name={n} /></IconButton>
                        <Caret faded />
                    </ToolPair>
                ))}
            </ViewTools>
            <DocButtons>
                {['paneLeft', 'paneRight', 'min', 'restore', 'close'].map(n => (
                    <IconButton key={n} aria-label={n}><Icon name={n} size={14} /></IconButton>
                ))}
            </DocButtons>
        </TopRow>
    )
}

const Branch = ({ open, last }) => (
    <svg width="21" height="22" viewBox="0 0 21 22" aria-hidden="true">
        <path d={last ? 'M10.5 0v11' : 'M10.5 0v22'} stroke="#555" strokeDasharray="1 2" />
        <path d="M11 11.5h10" stroke="#555" strokeDasharray="1 2" />
        {open && (
            <>
                <path d="M5.5 6.5h10v10h-10z" fill="#f4f6f8" stroke="#8a8f99" />
                <path d="M7 11.5h7M10.5 8v7" stroke="#2b3a73" />
            </>
        )}
    </svg>
)

function FeatureTree() {
    return (
        <TreePanel>
            <TreeTabs>
                <TreeTab $active aria-label="Feature tree"><Icon name="assembly" size={18} /></TreeTab>
                <TreeTab aria-label="Properties"><Icon name="hand" size={18} /></TreeTab>
                <TreeTab aria-label="Configurations"><Icon name="config" size={18} /></TreeTab>
                <TreeTab aria-label="Display"><Icon name="ball" size={18} /></TreeTab>
                <IconButton aria-label="More"><Icon name="doubleRight" size={14} /></IconButton>
            </TreeTabs>
            <Filter>
                <Icon name="funnel" size={14} />
                <Caret />
                <input aria-label="Filter tree" />
            </Filter>
            <Tree>
                <TreeRoot>
                    <Icon name="assembly" />
                    <Icon name="error" size={13} />
                    <span>Assem&nbsp; (Default&lt;Displ</span>
                </TreeRoot>
                {treeItems.map((t, i) => (
                    <TreeRow key={i}>
                        <Branch open={t.open} last={i === treeItems.length - 1} />
                        <Icon name={t.icon} />
                        {t.badge && <Icon name={t.badge} size={13} />}
                        <TreeText $selected={t.selected} $tone={t.badge}>{t.text}</TreeText>
                    </TreeRow>
                ))}
            </Tree>
            <TreeScroll><i /></TreeScroll>
            <PanelGrip aria-label="Collapse panel">
                <svg width="4" height="26" viewBox="0 0 4 26" aria-hidden="true">
                    <path d="M4 0v6L0 3zM4 10v6l-4-3zM4 20v6l-4-3z" fill="#222" />
                </svg>
            </PanelGrip>
        </TreePanel>
    )
}

function Model() {
    return (
        <svg viewBox="193 164 1390 814" preserveAspectRatio="xMidYMid meet" aria-hidden="true">
            <g stroke="#0a0a0a" strokeWidth="1.5" strokeLinejoin="round">
                <path d="M466 345l8-10 10 1 186 334h-24z" fill="#5f6060" />
                <path d="M473 338l186 332" fill="none" />
                <path d="M542 686h717v18H542z" fill="#6a6976" />
                <path d="M613 711h575v47H613z" fill="#6a6a6b" />
                <path d="M542 758h717v12H542z" fill="#6a6a76" />
                <path d="M516 671h769v15H516z" fill="#003f80" />
                <path d="M516 771h769v15H516z" fill="#003f80" />
                <path d="M658 671v15M1009 671v15M1218 671v15M657 771v15M1008 771v15M1217 771v15M1036 711v47M1093 711v47M1106 711v47" />
                <path d="M1035 725h89v16h-89zM1052 725v16" fill="#6a6a6b" />
            </g>
            <path d="M580 704l314 5v2l-100-2zM1220 704l-312 5v2l100-2z" fill="#1d1d20" />
            <path d="M715 707l180 2-60-3z" fill="#e8e9ef" />
            <path d="M908 709l120-2-60-1z" fill="#e8e9ef" />
            <path d="M661 706h50v5h-50z" fill="#44444a" />
            <path d="M664 706v5M670 706v5M676 706v5M684 706v5M692 706v5M700 706v5" stroke="#111" />
            <path d="M893 705h15v5h-15z" fill="#6a6976" stroke="#222" strokeWidth=".6" />
            <path d="M516 771h769" stroke="#4f9ff0" strokeWidth="2" />
            <path d="M807 771h52l-1 5h-49zM1244 772h13v4h-13z" fill="#777780" />
            <path d="M900 667v8M897 670h7M900 769v6" stroke="#8a93a6" />
            <path d="M993 768v7" stroke="#5fa8ef" />
            <g>
                <path d="M241 885h5v25h-5z" fill="#5fc05f" stroke="#14571a" />
                <path d="M238 884l6-11 6 11z" fill="#176a1d" />
                <circle cx="244" cy="911" r="5" fill="#fbe3e3" />
                <path d="M245 908h26v4h-26z" fill="#7f86f2" stroke="#15159a" />
                <path d="M270 904l11 6-11 6z" fill="#1515c0" />
                <path d="M241 913l4-4" stroke="#d02020" />
            </g>
            <text x="239" y="869" fontSize="13" fill="#2d8a33">Y</text>
            <text x="280" y="914" fontSize="13" fill="#2222c8">Z</text>
        </svg>
    )
}

function Resources() {
    return (
        <ResourcePanel>
            <ResourceHead>
                <IconButton aria-label="Collapse"><Icon name="doubleLeft" size={14} /></IconButton>
                <h2>SOLIDWORKS Resources</h2>
                <Icon name="pin" />
            </ResourceHead>
            <ResourceBody>
                <ResourceMain>
                    <ResourceList>
                        {resources.map(box => (
                            <ResourceBox key={box.title}>
                                <h3>{box.title}<Icon name="collapse" /></h3>
                                {box.links.map(([icon, text, high]) => (
                                    <ResourceLink key={text} href="#" $high={high}>
                                        <Icon name={icon} />
                                        <span>{text}</span>
                                    </ResourceLink>
                                ))}
                            </ResourceBox>
                        ))}
                    </ResourceList>
                    <HScroll>
                        <Icon name="chevronLeft" />
                        <i />
                        <Icon name="chevronRight" />
                    </HScroll>
                </ResourceMain>
                <VScroll>
                    <Icon name="chevronUp" />
                    <i />
                    <Icon name="chevronDown" />
                </VScroll>
            </ResourceBody>
        </ResourcePanel>
    )
}

const TaskIcon = ({ name }) => (
    <svg width="32" height="32" viewBox="0 0 32 32" aria-hidden="true">{taskIcons[name]}</svg>
)

function Taskbar() {
    return (
        <TaskbarWrap>
            <Weather>
                <svg width="32" height="30" viewBox="0 0 32 30" aria-hidden="true">
                    <circle cx="16" cy="15" r="13" fill="#f59a23" />
                    <path d="M4 11c-5 0-4-6 0-6 1-5 9-5 10 0 4 0 4 6 0 6z" fill="#d5e2f7" />
                    <path d="M17 28c-4 0-4-5 0-6 1-5 9-5 10 0 5 0 5 6 0 6z" fill="#c3d5f3" />
                </svg>
                <div>
                    31°C
                    <small>Partly sunny</small>
                </div>
            </Weather>
            <TaskCenter>
                <TaskCell aria-label="Start"><TaskIcon name="start" /></TaskCell>
                <TaskSearch>
                    <svg width="20" height="20" viewBox="0 0 20 20" aria-hidden="true">
                        <circle cx="8" cy="8" r="7" fill="none" stroke="#ece8e5" strokeWidth="2" />
                        <path d="M13 13l6 6" stroke="#ece8e5" strokeWidth="2" />
                    </svg>
                    <input aria-label="Search" placeholder="Search" />
                    <svg width="58" height="32" viewBox="0 0 58 32" aria-hidden="true">
                        <path d="M1 28l12-9h38l6 9-6 3H6z" fill="#dcb27c" />
                        <path d="M7 11l10-4 8-2 3 17-9 1-8 4z" fill="#f2f4ee" stroke="#43a35a" />
                        <path d="M17 7l2 16M10 13l5-2M11 17l5-2M20 10l5-1M21 14l4-1" stroke="#9aa39a" />
                        <path d="M22 16l6-12 3 2-6 11-3 1z" fill="#f59a3c" />
                        <path d="M28 4l1-2 3 2-1 2z" fill="#ee5a5a" />
                        <path d="M37 28V12C37-1 54-1 54 12v16c0 3-17 3-17 0z" fill="#1f5fe0" />
                        <path d="M39 18h13v7H39zM42 6h8" fill="#3a86ff" stroke="#7ab6ff" />
                        <path d="M4 1v6M1 4h6" stroke="#d67be0" strokeWidth="2" />
                        <circle cx="33" cy="15" r="2" fill="#3fd0c4" />
                        <circle cx="56" cy="5" r="2" fill="#f2a52a" />
                    </svg>
                </TaskSearch>
                {['taskView', 'chat', 'edge'].map(n => (
                    <TaskCell key={n} aria-label={n}><TaskIcon name={n} /></TaskCell>
                ))}
                <TaskCell aria-label="Files" $running><TaskIcon name="files" /></TaskCell>
                <TaskCell aria-label="Mail"><TaskIcon name="mail" /></TaskCell>
                <TaskCell><Adobe $c="#22b2e8" $bg="#04202e">Ps</Adobe></TaskCell>
                <TaskCell><Adobe $c="#ee7d1a" $bg="#291403">Ai</Adobe></TaskCell>
                <TaskCell aria-label="Notepad"><TaskIcon name="notepad" /></TaskCell>
                <TaskCell aria-label="Bolt"><TaskIcon name="bolt" /></TaskCell>
                <TaskCell>
                    <Clapper>
                        <svg width="28" height="12" viewBox="0 0 28 12" aria-hidden="true">
                            <path d="M0 8L26 0v5L1 12z" fill="#e8e8e8" />
                            <path d="M5 6l3 4M11 4l3 4M17 2l3 4M23 1l2 4" stroke="#111" strokeWidth="3" />
                        </svg>
                        <span><b>3</b><b>2</b><b>1</b></span>
                    </Clapper>
                </TaskCell>
                <TaskCell aria-label="Camera"><TaskIcon name="lightroomCam" /></TaskCell>
                <TaskCell><Adobe $c="#3fa9f5" $bg="#06213f" $flat>LrC</Adobe></TaskCell>
                <TaskCell aria-label="Chrome" $running><TaskIcon name="chrome" /></TaskCell>
                <TaskCell $active aria-label="SolidWorks">
                    <svg width="32" height="32" viewBox="0 0 32 32" aria-hidden="true">
                        <path d="M2 7L17 1l13 5v20L16 31 2 26z" fill="#c91717" />
                        <path d="M2 7L17 1l13 5-14 6z" fill="#ee4a42" />
                        <path d="M16 12l14-6v20l-14 5z" fill="#960d0d" />
                        <text x="4" y="20" fontSize="12" fontWeight="700" fill="#fff">S</text>
                        <text x="16" y="20" fontSize="12" fontWeight="700" fill="#fff">W</text>
                        <text x="14" y="31" fontSize="7" fontWeight="700" fill="#fff">2015</text>
                    </svg>
                </TaskCell>
            </TaskCenter>
            <Tray>
                <svg width="16" height="10" viewBox="0 0 16 10" aria-hidden="true">
                    <path d="M2 8l6-6 6 6" fill="none" stroke="#fff" strokeWidth="2" />
                </svg>
                <svg width="20" height="18" viewBox="0 0 20 18" aria-hidden="true">
                    <path d="M3 1h14l2 2v12l-2 2H3l-2-2V3zM1 10h18M10 10v7" fill="none" stroke="#fff" strokeWidth="1.6" />
                </svg>
                <span>ENG</span>
                <TrayIcons>
                    <svg width="20" height="20" viewBox="0 0 20 20" aria-hidden="true">
                        <path d="M1 6l2 3h4L5 2h3l5 7h4c2 0 2 3 0 3h-4l-5 7H5l2-7H3l-2 3z" fill="none" stroke="#fff" strokeWidth="1.4" />
                    </svg>
                    <svg width="21" height="18" viewBox="0 0 21 18" aria-hidden="true">
                        <path d="M1 6h4l5-5v16l-5-5H1zM13 6c2 2 2 4 0 6M15 3c4 4 4 8 0 12M18 1c4 5 4 11 0 16" fill="none" stroke="#fff" strokeWidth="1.3" />
                    </svg>
                    <svg width="21" height="20" viewBox="0 0 21 20" aria-hidden="true">
                        <rect x="2" y="5" width="15" height="12" rx="3" fill="none" stroke="#fff" strokeWidth="1.5" />
                        <path d="M5 8h9v6H5zM18 9h2v4h-2z" fill="#fff" />
                        <path d="M6 0L1 7h3l-1 5 5-7H5z" fill="#fff" stroke="#222" />
                    </svg>
                </TrayIcons>
                <Clock>
                    <span>5:54 PM</span>
                    <span>6/24/2023</span>
                </Clock>
                <Bell>1</Bell>
            </Tray>
        </TaskbarWrap>
    )
}

export default function App() {
    return (
        <Page>
            <GlobalStyle />
            <TitleBar />
            <Ribbon />
            <Work>
                <WorkMain>
                    <CommandTabs />
                    <Split>
                        <FeatureTree />
                        <Viewport>
                            <Model />
                            <ViewName>*Left</ViewName>
                            <SideTabs>
                                {['home', 'library', 'explorer', 'palette', 'ball', 'hand'].map((n, i) => (
                                    <SideTab key={n} aria-label={n} $active={i === 0}><Icon name={n} /></SideTab>
                                ))}
                            </SideTabs>
                        </Viewport>
                    </Split>
                    <SheetTabs>
                        {['navFirst', 'navPrev', 'navNext', 'navLast'].map(n => (
                            <SheetNav key={n} aria-label={n}><Icon name={n} size={14} /></SheetNav>
                        ))}
                        <SheetTab $w={72} $active>Model</SheetTab>
                        <SheetTab $w={89}>3D Views</SheetTab>
                        <SheetTab $w={142} $wide>Motion Study 1</SheetTab>
                    </SheetTabs>
                </WorkMain>
                <Resources />
            </Work>
            <Status>
                <span>SOLIDWORKS Premium 2015 x64 Edition</span>
                <StatusRight>
                    <span>Under Defined</span>
                    <span>Editing Assembly</span>
                    <Units>
                        IPS
                        <svg width="6" height="4" viewBox="0 0 6 4" aria-hidden="true"><path d="M0 4h6L3 0z" fill="#333" /></svg>
                    </Units>
                    <IconButton aria-label="Quick tips"><Icon name="helpGreen" size={15} /></IconButton>
                    <IconButton aria-label="Tags"><Icon name="tag" /></IconButton>
                </StatusRight>
            </Status>
            <Taskbar />
        </Page>
    )
}

const GlobalStyle = createGlobalStyle`
    * {
        box-sizing: border-box;
    }

    body {
        margin: 0;
        overflow: hidden;
        font-family: 'Open Sans', 'Noto Sans', sans-serif;
        font-size: 14px;
        color: #16181c;
    }

    button, input {
        font: inherit;
        color: inherit;
        border: 0;
        padding: 0;
        background: none;
        outline: 0;
    }

    svg {
        display: block;
        flex: none;
    }
`

const Page = styled.div`
    height: 100vh;
    display: flex;
    flex-direction: column;
`

const IconButton = styled.button`
    display: flex;
    align-items: center;
    justify-content: center;
`

const TitleWrap = styled.header`
    display: flex;
    align-items: center;
    height: 40px;
    flex: none;
    background: linear-gradient(#dcdfe0, #d3d8d9);
    border-top: 1px solid #f2f4f4;
    border-bottom: 1px solid #111;
    box-shadow: inset 0 -2px 0 #a5a8aa;
`

const Brand = styled.div`
    display: flex;
    align-items: center;
    align-self: stretch;
    width: 131px;
    padding-left: 4px;
    border-left: 5px solid #da291c;
    background: linear-gradient(#3a4148, #20262b);
    color: #fff;
    font-size: 13px;
    font-style: italic;

    svg {
        margin-right: 6px;
    }

    span {
        font-weight: 400;
    }
`

const MenuBar = styled.nav`
    display: flex;
    align-items: center;
    align-self: stretch;
    gap: 16px;
    width: 364px;
    padding-left: 18px;
    background: #a9abae;
    border-right: 1px solid #7e8083;
    font-size: 13px;

    svg {
        margin-left: -2px;
    }
`

const QuickTools = styled.div`
    display: flex;
    align-items: center;
    padding-left: 9px;
    gap: 10px;

    > button + button {
        margin-left: 2px;
    }

    > button + div {
        margin-left: 4px;
    }
`

const ToolPair = styled.div`
    display: flex;
    align-items: center;
    gap: 9px;
`

const SelectTool = styled.button`
    display: flex;
    width: 45px;
    height: 32px;
    margin-left: -8px;
    border: 1px solid #55585c;

    span {
        display: flex;
        align-items: center;
        justify-content: center;
        width: 31px;
        background: #b1b3b6;
    }

    i {
        display: flex;
        align-items: center;
        justify-content: center;
        flex: 1;
        border-left: 1px solid #77797c;
        background: #e3e5e7;
    }
`

const DocName = styled.div`
    flex: 1;
    text-align: center;
    font-size: 13px;
`

const HelpSearch = styled.label`
    display: flex;
    align-items: center;
    gap: 5px;
    width: 214px;
    height: 23px;
    padding: 0 4px;
    border: 1px solid #111;
    background: #f1f3f5;

    input {
        flex: 1;
        min-width: 0;
        padding-left: 4px;
        font-size: 11px;
    }

    input::placeholder {
        color: #5c5f63;
        opacity: 1;
    }
`

const WindowButtons = styled.div`
    display: flex;
    align-items: center;
    gap: 7px;
    padding: 0 4px 0 7px;
`

const RibbonWrap = styled.section`
    display: flex;
    height: 104px;
    flex: none;
    background: linear-gradient(90deg, #d8dcdf, #d9dae2);
    border-top: 1px solid #f0f1f4;
    border-bottom: 1px solid #111;
`

const RibbonGroup = styled.div`
    display: flex;
    height: 90px;
    margin-top: 4px;
    border-right: 1px solid #55585e;

    &:last-child {
        border-right: 0;
    }
`

const RibbonButton = styled.button`
    display: flex;
    flex-direction: column;
    align-items: center;
    width: ${props => props.$w}px;
    padding-top: ${props => props.$menu ? '2px' : '9px'};
    font-size: 13px;
    line-height: 19px;
    white-space: pre-line;
    text-align: center;

    span {
        margin-top: 1px;
    }

    span + svg {
        margin-top: 16px;
        width: 6px;
    }

    &:disabled {
        color: #85888e;
    }

    ${props => props.$pressed && css`
        height: 86px;
        margin-top: -3px;
        padding-top: 11px;
        background: #b3b5b8;
        border: 1px solid #515459;
    `}
`

const Work = styled.main`
    display: flex;
    flex: 1;
    min-height: 0;
`

const WorkMain = styled.div`
    display: flex;
    flex-direction: column;
    flex: 1;
    min-width: 0;
    background: #c6c8d4;
`

const TopRow = styled.div`
    display: flex;
    align-items: flex-start;
    height: 20px;
    flex: none;
`

const CommandTab = styled.button`
    height: 19px;
    padding: 0 8px;
    border: solid #222;
    border-width: 0 1px 1px 0;
    background: linear-gradient(#9fa1a4, #adafb1);
    font-size: 15px;
    line-height: 18px;
    white-space: nowrap;

    ${props => props.$active && css`
        height: 20px;
        padding: 0 7px;
        background: #e2e5e7;
        border-left-width: 1px;
        font-weight: 700;
    `}
`

const ViewTools = styled.div`
    display: flex;
    align-items: center;
    gap: 7px;
    margin: 5px 0 0 116px;

    ${ToolPair} {
        gap: 6px;
    }
`

const DocButtons = styled.div`
    display: flex;
    gap: 9px;
    margin: 6px 10px 0 auto;
`

const Split = styled.div`
    display: flex;
    flex: 1;
    min-height: 0;
`

const TreePanel = styled.aside`
    position: relative;
    display: flex;
    flex-direction: column;
    width: 193px;
    flex: none;
    padding-top: 5px;
    background: #e0e5e9;
    border-top: 2px solid #8b8fa8;
    border-right: 2px solid #222;
`

const TreeTabs = styled.div`
    display: flex;
    height: 24px;
    flex: none;
    background: #d7dae0;
    border-bottom: 1px solid #111;

    ${IconButton} {
        margin: 0 3px 0 auto;
    }
`

const TreeTab = styled.button`
    display: flex;
    align-items: center;
    justify-content: center;
    width: 28px;
    border: solid #222;
    border-width: 1px 1px 0 0;
    background: ${props => props.$active ? '#eef0f2' : '#aaacb0'};
`

const Filter = styled.label`
    display: flex;
    align-items: center;
    gap: 2px;
    height: 18px;
    flex: none;
    margin: 0 0 4px 1px;
    padding-left: 6px;
    border: 1px solid #55585e;
    background: #eff1f3;

    input {
        flex: 1;
        min-width: 0;
        height: 14px;
    }
`

const Tree = styled.div`
    border-bottom: 2px solid #2a5fae;
    font-size: 14px;
`

const TreeRow = styled.div`
    display: flex;
    align-items: center;
    height: 22px;
    white-space: nowrap;

    svg + svg + svg {
        margin-left: 4px;
    }
`

const TreeRoot = styled(TreeRow)`
    padding-left: 2px;
    gap: 4px;
    color: #c01820;

    span {
        margin-left: 1px;
    }
`

const tones = { error: '#c01828', warn: '#8a8f2a' }

const TreeText = styled.span`
    margin-left: 4px;
    padding-left: 1px;
    line-height: 20px;
    flex: 1;
    color: ${props => props.$selected ? '#e4f1ff' : tones[props.$tone] || 'inherit'};
    background: ${props => props.$selected ? '#0a72d0' : 'none'};
`

const TreeScroll = styled.div`
    display: flex;
    align-items: center;
    height: 22px;
    margin: auto 0 3px;
    padding-left: 20px;
    background: #f1f1f3;

    i {
        width: 62px;
        height: 6px;
        background: #87888b;
    }
`

const PanelGrip = styled.button`
    position: absolute;
    z-index: 1;
    top: 375px;
    left: 191px;
    display: flex;
    align-items: center;
    justify-content: center;
    width: 10px;
    height: 39px;
    border: 1px solid #222;
    border-left: 0;
    background: #e0e5e9;
`

const Viewport = styled.section`
    position: relative;
    flex: 1;
    min-width: 0;
    overflow: hidden;

    > svg {
        width: 100%;
        height: 100%;
    }
`

const ViewName = styled.div`
    position: absolute;
    left: 12px;
    bottom: 1px;
    font-size: 14px;
    font-weight: 600;
`

const SideTabs = styled.div`
    position: absolute;
    top: 39px;
    right: 0;
`

const SideTab = styled.button`
    display: flex;
    align-items: center;
    justify-content: center;
    width: 23px;
    height: 24px;
    border: solid #222;
    border-width: 1px 0 1px 1px;
    background: ${props => props.$active ? '#eef0f2' : '#aaacb0'};
`

const SheetTabs = styled.div`
    display: flex;
    height: 20px;
    flex: none;
    padding-left: 2px;
    background: #e2e6ea;
    border-top: 1px solid #111;
    border-right: 1px solid #555;
`

const SheetNav = styled.button`
    display: flex;
    align-items: center;
    justify-content: center;
    width: 19px;
    height: 18px;
    margin-right: 1px;
    border: 1px solid #8f92a2;
    background: #b4b7c4;
`

const SheetTab = styled.button`
    width: ${props => props.$w}px;
    height: 18px;
    padding-right: ${props => props.$wide ? '8px' : '0'};
    border: 1px solid #5d5f78;
    border-top: 0;
    border-left: 0;
    background: #c2c1d4;
    font-size: 15px;
    line-height: 18px;

    ${props => props.$active && css`
        margin-left: 4px;
        background: linear-gradient(#eef0f6, #d0d2e0);
        font-weight: 700;
    `}
`

const ResourcePanel = styled.aside`
    display: flex;
    flex-direction: column;
    width: 337px;
    flex: none;
    border-left: 2px solid #222;
    background: #e3e5eb;
`

const ResourceHead = styled.div`
    display: flex;
    align-items: center;
    justify-content: space-between;
    height: 24px;
    flex: none;
    padding: 0 3px 0 7px;
    background: #a9abaf;
    border-bottom: 1px solid #111;

    h2 {
        margin: 0;
        font-size: 14px;
        line-height: 22px;
    }
`

const ResourceBody = styled.div`
    display: flex;
    flex: 1;
    min-height: 0;
`

const ResourceMain = styled.div`
    display: flex;
    flex-direction: column;
    flex: 1;
    min-width: 0;
`

const ResourceList = styled.div`
    flex: 1;
    min-height: 0;
    overflow: hidden;
    padding: 5px 12px 0 13px;
`

const ResourceBox = styled.section`
    margin-bottom: 28px;
    border: 1px solid #111;
    background: #d8dae2;

    h3 {
        display: flex;
        align-items: center;
        justify-content: space-between;
        height: 24px;
        margin: 0;
        padding: 0 1px 0 5px;
        background: #a9abb0;
        border-bottom: 1px solid #111;
        color: #3c3f47;
        font-size: 13px;
    }
`

const ResourceLink = styled.a`
    display: flex;
    height: 32px;
    padding-left: 3px;
    gap: 4px;
    color: #0c0c45;
    font-size: 12px;
    line-height: 34px;
    text-decoration: none;

    svg {
        margin-top: ${props => props.$high ? '2px' : '8px'};
    }
`

const HScroll = styled.div`
    display: flex;
    align-items: center;
    height: 21px;
    flex: none;
    padding: 0 15px 0 16px;
    background: #f1f2f4;

    i {
        flex: 1;
        align-self: stretch;
        margin: 0 5px 0 4px;
        background: #cbccce;
    }
`

const VScroll = styled.div`
    display: flex;
    flex-direction: column;
    align-items: center;
    width: 18px;
    padding: 13px 0 36px;
    background: #f1f2f4;

    i {
        width: 100%;
        height: 616px;
        margin: 5px 0 auto;
        background: #cbccce;
    }
`

const Status = styled.footer`
    display: flex;
    align-items: center;
    justify-content: space-between;
    height: 22px;
    flex: none;
    padding: 0 5px 0 2px;
    border-top: 1px solid #111;
    background: #d7dbdf;
    line-height: 21px;

    span {
        padding-top: 1px;
    }
`

const StatusRight = styled.div`
    display: flex;
    align-items: center;

    > span {
        margin-right: 20px;
    }

    button + button {
        margin-left: 57px;
    }
`

const Units = styled.div`
    display: flex;
    align-items: center;
    gap: 29px;
    margin: 0 18px 0 52px;
`

const TaskbarWrap = styled.footer`
    display: grid;
    grid-template-columns: 1fr auto 1fr;
    align-items: center;
    height: 60px;
    flex: none;
    background: linear-gradient(90deg, #222 18%, #2f1c13 26%, #2f1c13 36%, #222 48%, #242424);
    color: #fff;
`

const Weather = styled.div`
    display: flex;
    align-items: center;
    gap: 8px;
    padding-left: 24px;
    line-height: 20px;

    small {
        display: block;
        color: #c2c2c2;
        font-size: 14px;
    }
`

const TaskCenter = styled.div`
    display: flex;
    align-items: center;
`

const TaskCell = styled.button`
    position: relative;
    display: flex;
    align-items: center;
    justify-content: center;
    width: 55px;
    height: 50px;
    border-radius: 6px;

    ${props => props.$active && css`
        width: 50px;
        margin: 0 3px 0 2px;
        background: #303030;
    `}

    ${props => (props.$running || props.$active) && css`
        &::after {
            content: '';
            position: absolute;
            bottom: 0;
            width: ${props.$active ? 20 : 8}px;
            height: 4px;
            border-radius: 2px;
            background: #9b9b9b;
        }
    `}
`

const TaskSearch = styled.label`
    display: flex;
    align-items: center;
    gap: 11px;
    width: 275px;
    height: 40px;
    margin: 0 3px 0 4px;
    padding: 0 8px 0 14px;
    border: 1px solid #655049;
    border-radius: 20px;
    background: #4a372f;

    input {
        flex: 1;
        min-width: 0;
        font-size: 15px;
    }

    input::placeholder {
        color: #d5cdc9;
        opacity: 1;
    }
`

const Adobe = styled.span`
    width: 28px;
    height: 27px;
    border: 2px solid ${props => props.$flat ? props.$bg : props.$c};
    background: ${props => props.$bg};
    color: ${props => props.$c};
    font-size: 14px;
    font-weight: 600;
    line-height: 22px;
    text-align: center;
`

const Clapper = styled.span`
    display: flex;
    flex-direction: column;

    span {
        display: flex;
        justify-content: center;
        height: 17px;
        background: #f2f2f2;
        font-size: 14px;
        line-height: 17px;
        color: #2c62c0;
    }

    b:first-child {
        color: #d0402c;
    }

    b:last-child {
        color: #2b9a46;
    }
`

const Tray = styled.div`
    display: flex;
    align-items: center;
    justify-content: flex-end;
    padding-right: 25px;

    > svg {
        margin-right: 23px;
    }
`

const TrayIcons = styled.div`
    display: flex;
    align-items: center;
    gap: 9px;
    margin: 0 21px 0 22px;
`

const Clock = styled.div`
    display: flex;
    flex-direction: column;
    align-items: flex-end;
    width: 68px;
    line-height: 20px;
`

const Bell = styled.span`
    width: 20px;
    height: 20px;
    margin-left: 9px;
    border-radius: 50%;
    background: #97a3ae;
    color: #222;
    font-size: 12px;
    line-height: 20px;
    text-align: center;
`
